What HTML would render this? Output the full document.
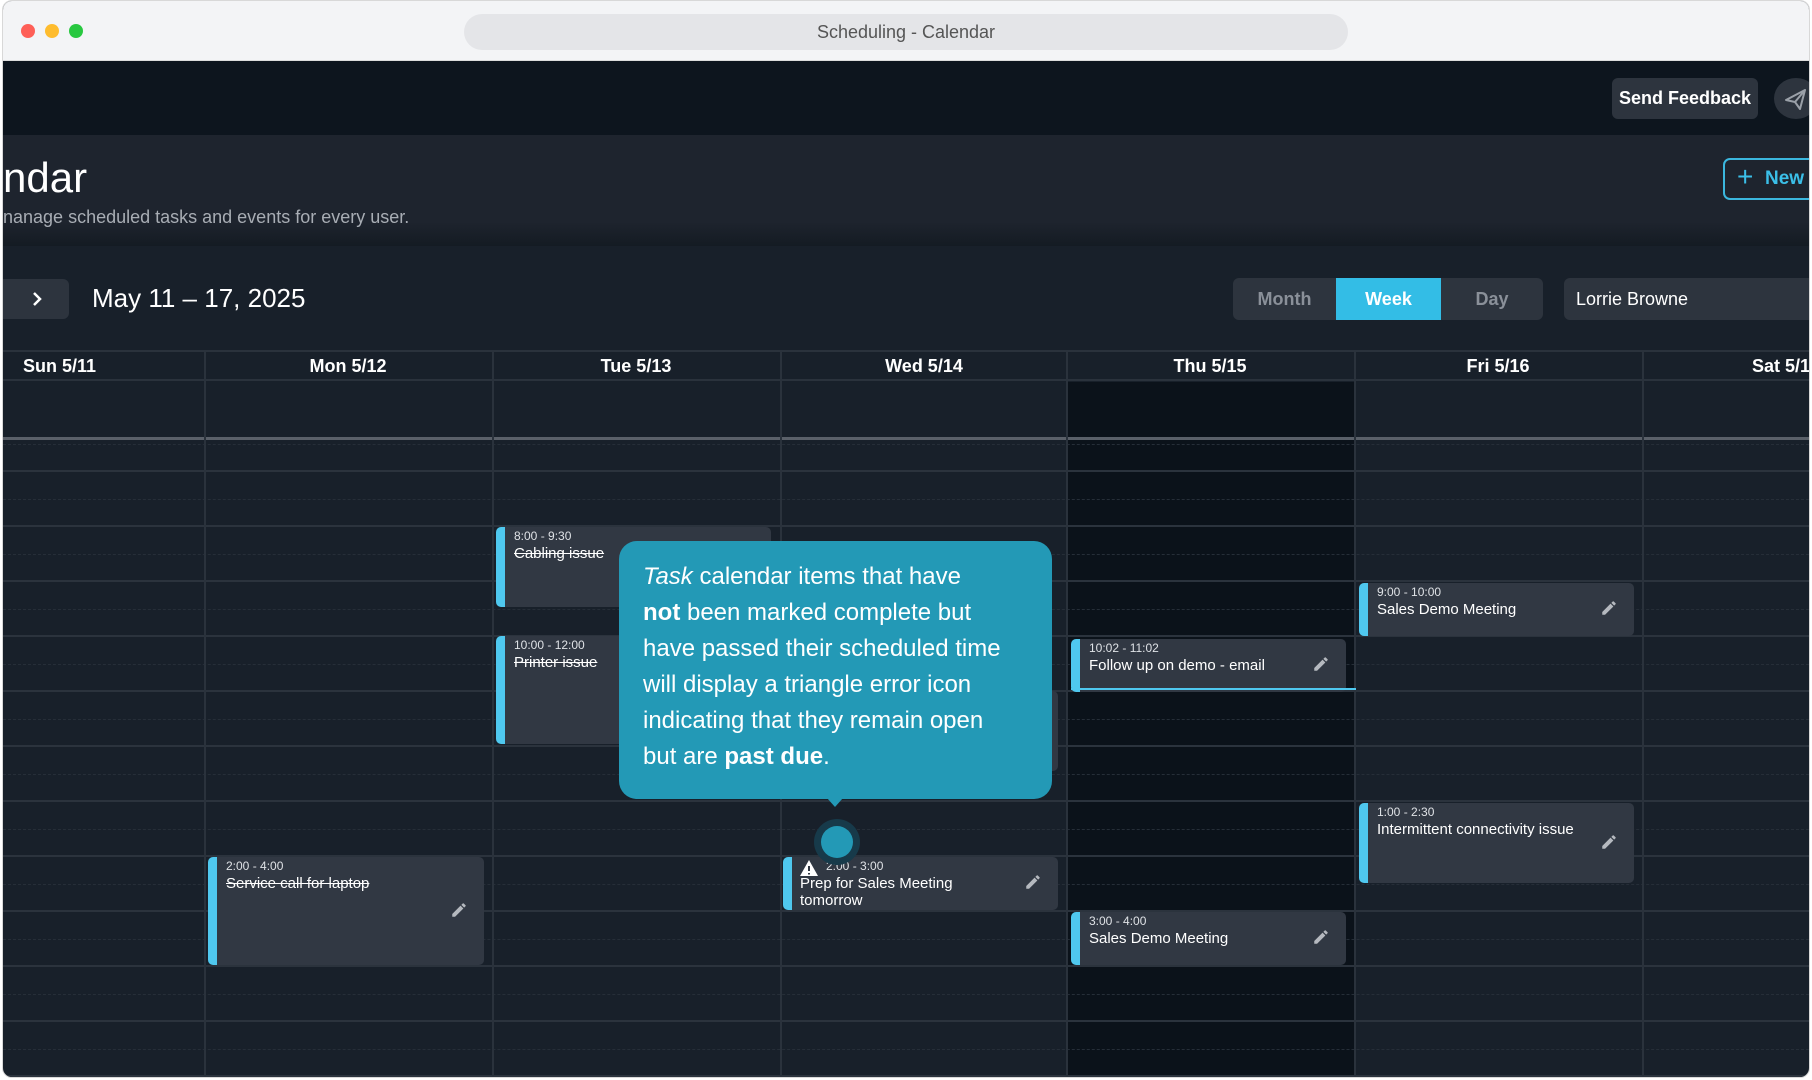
<!DOCTYPE html>
<html><head><meta charset="utf-8"><style>
*{box-sizing:border-box;margin:0;padding:0}
body{width:1812px;height:1080px;background:#fff;font-family:"Liberation Sans",sans-serif;position:relative;overflow:hidden}
.win{position:absolute;left:2px;top:0;width:1808px;height:1078px;border-radius:10px;overflow:hidden;background:#18202a;border:1px solid #d8d8d8}
.tb{position:absolute;left:0;top:0;right:0;height:60px;background:#f3f4f6;border-bottom:1px solid #dcdcdc}
.dot{position:absolute;top:23px;width:14px;height:14px;border-radius:50%}
.url{position:absolute;left:461px;top:13px;width:884px;height:36px;border-radius:18px;background:#e4e5e8;color:#555;font-size:18px;text-align:center;line-height:36px}
.top{position:absolute;left:0;top:60px;right:0;height:74px;background:#0d151e}
.sf{position:absolute;left:1609px;top:17px;width:146px;height:41px;border-radius:6px;background:#2d343e;color:#fff;font-weight:bold;font-size:18px;line-height:41px;text-align:center}
.pl{position:absolute;left:1771px;top:17px;width:44px;height:41px;border-radius:50%;background:#2d343e}
.hdr{position:absolute;left:0;top:134px;right:0;height:111px;background:linear-gradient(#1e242e 0,#1e242e 78%,#141b23 100%)}
.h1{position:absolute;left:0;top:19px;font-size:42px;color:#fff}
.sub{position:absolute;left:0;top:72px;font-size:18px;color:#a8adb4}
.nb{position:absolute;left:1720px;top:23px;width:120px;height:42px;border:2px solid #3bb7de;border-radius:7px;color:#3bbfe8;font-weight:bold;font-size:19px;line-height:38px;padding-left:40px}
.nav{position:absolute;left:-6px;top:278px;width:72px;height:40px;background:#2d343e;border-radius:6px}
.date{position:absolute;left:89px;top:282px;font-size:26px;color:#fff}
.seg{position:absolute;top:277px;height:42px;font-size:18px;line-height:42px;text-align:center;font-weight:bold;color:#8a9099;background:#2d343e}
.dd{position:absolute;left:1561px;top:277px;width:260px;height:42px;background:#2d343e;border-radius:6px;color:#fff;font-size:18px;line-height:42px;padding-left:12px}
.grid{position:absolute;left:0;top:349px;right:0;bottom:0;border-top:2px solid #2a323c}
.ch{position:absolute;top:0;height:29px;font-weight:bold;color:#fff;font-size:18px;line-height:28px;text-align:center;border-bottom:2px solid #2a323c}
.vl{position:absolute;top:0;bottom:0;width:2px;background:#2a323c}
.hl{position:absolute;left:0;right:0;height:2px;background:#2b333d}
.dl{position:absolute;left:0;right:0;height:0;border-top:1px dashed #262e38}
.ev{position:absolute;background:#313843;border-radius:5px;border-left:9px solid #4fc8ef;color:#fff;padding:2px 0 0 9px}
.ev .t{font-size:12px;color:#dfe2e6}
.ev .n{font-size:15px;margin-top:2px}
.ev s{text-decoration:line-through}
.pen{position:absolute;right:16px;width:18px;height:18px}
.tip{position:absolute;left:616px;top:540px;width:433px;height:258px;background:#2399b6;border-radius:18px;color:#fff;font-size:24px;line-height:36px;padding:18px 0 0 24px}
</style></head><body>
<div class="win">
<div class="tb"><div class="dot" style="left:18px;background:#fe5f57"></div><div class="dot" style="left:42px;background:#febc2e"></div><div class="dot" style="left:66px;background:#28c840"></div><div class="url">Scheduling - Calendar</div></div>
<div class="top"><div class="sf">Send Feedback</div><div class="pl"><svg width="44" height="41" viewBox="0 0 44 41"><path d="M12 22 L31 12 L26 31 L21 24 Z M21 24 L31 12" fill="none" stroke="#9aa0a8" stroke-width="2" stroke-linejoin="round"/></svg></div></div>
<div class="hdr"><div class="h1">ndar</div><div class="sub">nanage scheduled tasks and events for every user.</div>
<div class="nb"><span style="position:absolute;left:12px;top:-2px;font-size:28px;font-weight:normal">+</span>New C</div></div>
<div class="nav"><svg width="72" height="40"><path d="M37 14 L43 20 L37 26" fill="none" stroke="#fff" stroke-width="2.5"/></svg></div>
<div class="date">May 11 – 17, 2025</div>
<div class="seg" style="left:1230px;width:103px;border-radius:6px 0 0 6px">Month</div>
<div class="seg" style="left:1333px;width:105px;background:#33bde6;color:#fff">Week</div>
<div class="seg" style="left:1438px;width:102px;border-radius:0 6px 6px 0">Day</div>
<div class="dd">Lorrie Browne</div>
<div class="grid">
<div style="position:absolute;left:1063px;width:288px;top:30px;bottom:0;background:#0b121a"></div>
<div class="ch" style="left:0;width:1810px"></div>
<div class="ch" style="left:20px;text-align:left">Sun 5/11</div>
<div class="ch" style="left:201px;width:288px">Mon 5/12</div>
<div class="ch" style="left:489px;width:288px">Tue 5/13</div>
<div class="ch" style="left:777px;width:288px">Wed 5/14</div>
<div class="ch" style="left:1063px;width:288px">Thu 5/15</div>
<div class="ch" style="left:1351px;width:288px">Fri 5/16</div>
<div class="ch" style="left:1639px;width:288px">Sat 5/17</div>
<div class="hl" style="top:85px;height:3px;background:#5a6069"></div>
<div class="hl" style="top:118px"></div><div class="hl" style="top:173px"></div><div class="hl" style="top:228px"></div><div class="hl" style="top:283px"></div><div class="hl" style="top:338px"></div><div class="hl" style="top:393px"></div><div class="hl" style="top:448px"></div><div class="hl" style="top:503px"></div><div class="hl" style="top:558px"></div><div class="hl" style="top:613px"></div><div class="hl" style="top:668px"></div><div class="hl" style="top:723px"></div>
<div class="dl" style="top:92px"></div><div class="dl" style="top:147px"></div><div class="dl" style="top:202px"></div><div class="dl" style="top:257px"></div><div class="dl" style="top:312px"></div><div class="dl" style="top:367px"></div><div class="dl" style="top:422px"></div><div class="dl" style="top:477px"></div><div class="dl" style="top:532px"></div><div class="dl" style="top:587px"></div><div class="dl" style="top:642px"></div><div class="dl" style="top:697px"></div>
<div class="vl" style="left:201px"></div><div class="vl" style="left:489px"></div><div class="vl" style="left:777px"></div><div class="vl" style="left:1063px"></div><div class="vl" style="left:1351px"></div><div class="vl" style="left:1639px"></div>
</div>
<div class="ev" style="left:493px;top:526px;width:275px;height:80px"><div class="t">8:00 - 9:30</div><div class="n"><s>Cabling issue</s></div></div>
<div class="ev" style="left:493px;top:635px;width:275px;height:108px"><div class="t">10:00 - 12:00</div><div class="n"><s>Printer issue</s></div></div>
<div class="ev" style="left:780px;top:690px;width:275px;height:80px;border-left:none"></div>
<div class="ev" style="left:1356px;top:582px;width:275px;height:53px"><div class="t">9:00 - 10:00</div><div class="n">Sales Demo Meeting</div><svg class="pen" style="top:16px" viewBox="0 0 24 24"><path d="M3 17.25V21h3.75L17.81 9.94l-3.75-3.75L3 17.25zM20.71 7.04a1 1 0 000-1.41l-2.34-2.340a1 1 0 00-1.41 0l-1.83 1.83 3.75 3.75 1.83-1.83z" fill="#b5b9bf"/></svg></div>
<div class="ev" style="left:1068px;top:638px;width:275px;height:53px"><div class="t">10:02 - 11:02</div><div class="n">Follow up on demo - email</div><svg class="pen" style="top:16px" viewBox="0 0 24 24"><path d="M3 17.25V21h3.75L17.81 9.94l-3.75-3.75L3 17.25zM20.71 7.04a1 1 0 000-1.41l-2.34-2.34a1 1 0 00-1.41 0l-1.83 1.83 3.75 3.75 1.83-1.830z" fill="#b5b9bf"/></svg></div>
<div style="position:absolute;left:1068px;top:687px;width:285px;height:2px;background:#4fc8ef"></div>
<div class="ev" style="left:1356px;top:802px;width:275px;height:80px"><div class="t">1:00 - 2:30</div><div class="n">Intermittent connectivity issue</div><svg class="pen" style="top:30px" viewBox="0 0 24 24"><path d="M3 17.25V21h3.75L17.81 9.94l-3.75-3.75L3 17.25zM20.71 7.04a1 1 0 000-1.41l-2.34-2.34a1 1 0 00-1.41 0l-1.83 1.83 3.75 3.75 1.83-1.83z" fill="#b5b9bf"/></svg></div>
<div class="ev" style="left:205px;top:856px;width:276px;height:108px"><div class="t">2:00 - 4:00</div><div class="n"><s>Service call for laptop</s></div><svg class="pen" style="top:44px" viewBox="0 0 24 24"><path d="M3 17.25V21h3.75L17.81 9.94l-3.75-3.75L3 17.25zM20.71 7.04a1 1 0 000-1.41l-2.34-2.34a1 1 0 00-1.41 0l-1.83 1.83 3.75 3.75 1.83-1.83z" fill="#b5b9bf"/></svg></div>
<div class="ev" style="left:780px;top:856px;width:275px;height:53px;padding-left:8px"><div class="t" style="padding-left:26px">2:00 - 3:00</div><svg style="position:absolute;left:7px;top:2px" width="20" height="18" viewBox="0 0 20 18"><path d="M10 1 L19 17 L1 17 Z" fill="#fff"/><path d="M10 7v5M10 14v1.5" stroke="#313843" stroke-width="2"/></svg><div class="n" style="line-height:17px">Prep for Sales Meeting<br>tomorrow</div><svg class="pen" style="top:16px" viewBox="0 0 24 24"><path d="M3 17.25V21h3.75L17.81 9.94l-3.75-3.75L3 17.25zM20.71 7.04a1 1 0 000-1.41l-2.34-2.34a1 1 0 00-1.41 0l-1.83 1.83 3.75 3.75 1.83-1.83z" fill="#b5b9bf"/></svg></div>
<div class="ev" style="left:1068px;top:911px;width:275px;height:53px"><div class="t">3:00 - 4:00</div><div class="n">Sales Demo Meeting</div><svg class="pen" style="top:16px" viewBox="0 0 24 24"><path d="M3 17.25V21h3.75L17.81 9.94l-3.75-3.75L3 17.25zM20.71 7.04a1 1 0 000-1.41l-2.34-2.34a1 1 0 00-1.41 0l-1.83 1.83 3.75 3.75 1.83-1.83z" fill="#b5b9bf"/></svg></div>
<div class="tip"><i>Task</i> calendar items that have<br><b>not</b> been marked complete but<br>have passed their scheduled time<br>will display a triangle error icon<br>indicating that they remain open<br>but are <b>past due</b>.</div>
<div style="position:absolute;left:824px;top:797px;width:0;height:0;border-left:8px solid transparent;border-right:8px solid transparent;border-top:9px solid #2399b6"></div>
<div style="position:absolute;left:811px;top:818px;width:46px;height:46px;border-radius:50%;background:#173a4a"></div>
<div style="position:absolute;left:818px;top:825px;width:32px;height:32px;border-radius:50%;background:#2399b6"></div>
</div>
</body></html>
